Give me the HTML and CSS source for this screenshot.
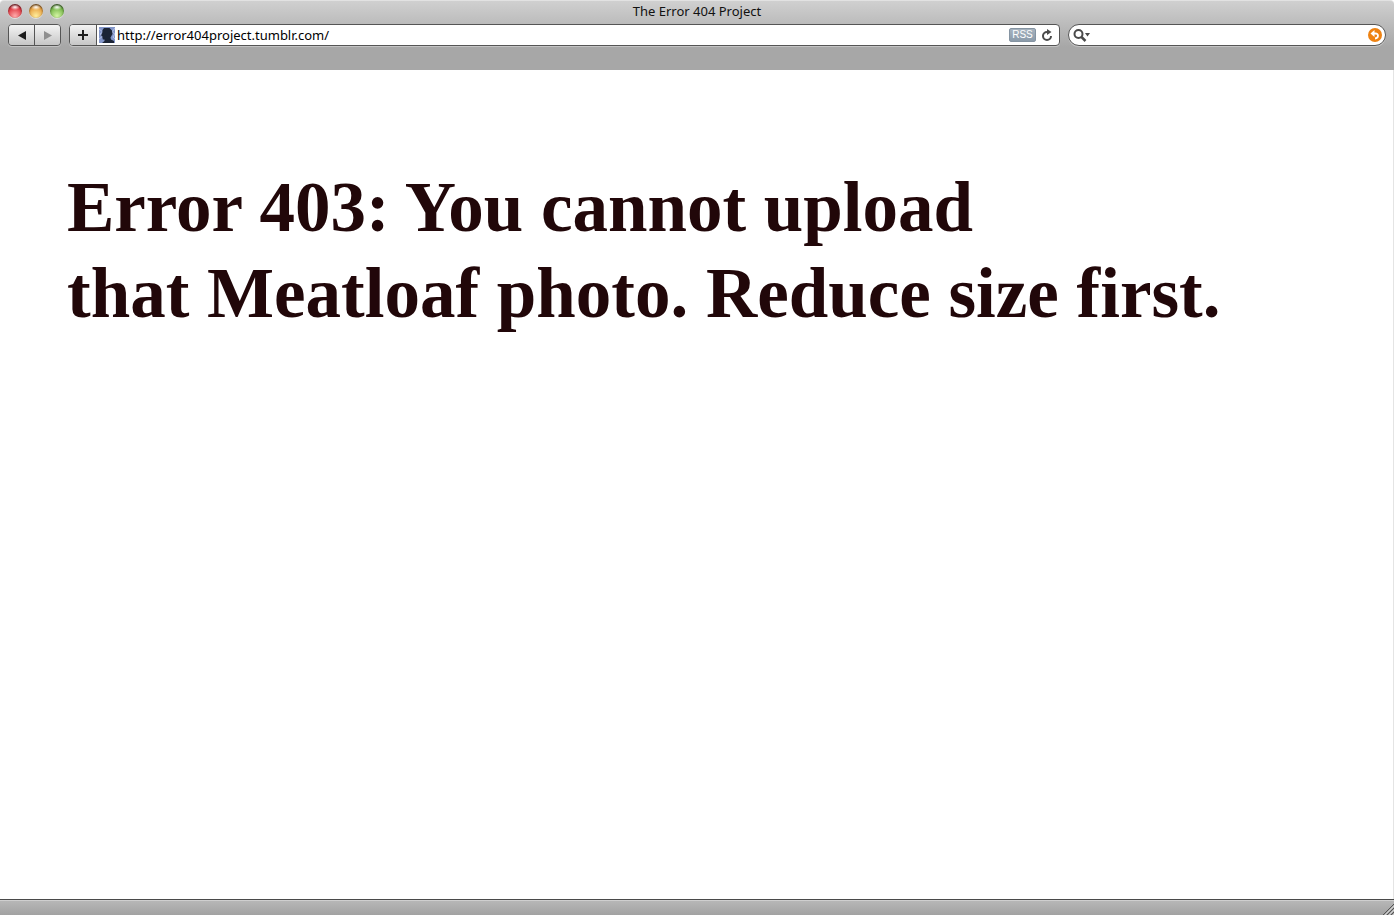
FILE: index.html
```html
<!DOCTYPE html>
<html lang="en">
<head>
  <meta charset="UTF-8">
  <title>The Error 404 Project</title>
  <link rel="stylesheet" href="styles.css">
</head>
<body>
  <header class="chrome">
    <div class="titlebar">
      <div class="lights">
        <button class="light red" aria-label="Close"></button>
        <button class="light yellow" aria-label="Minimize"></button>
        <button class="light green" aria-label="Zoom"></button>
      </div>
      <div class="window-title">The Error 404 Project</div>
    </div>

    <div class="toolbar">
      <div class="nav-buttons">
        <button class="tool-button" aria-label="Back">
          <svg width="10" height="10" viewBox="0 0 10 10"><path d="M9 1v9L1 5.500z" fill="#1c1c1c"/></svg>
        </button>
        <button class="tool-button" aria-label="Forward">
          <svg width="10" height="10" viewBox="0 0 10 10"><path d="M1 1v9l8-4.500z" fill="#8f8f8f"/></svg>
        </button>
      </div>

      <form class="address-bar">
        <button type="button" class="tool-button add-button" aria-label="Add bookmark">
          <svg width="12" height="12" viewBox="0 0 12 12"><path d="M6 1v10M1 6h10" stroke="#1c1c1c" stroke-width="2"/></svg>
        </button>
        <svg class="favicon" width="16" height="16" viewBox="0 0 16 16">
          <rect width="16" height="16" fill="#8396c9"/>
          <path d="M0 2l4 3-3 2 3 2-4 3M16 1l-3 4 3 2-2 3 2 2" fill="none" stroke="#b4c1e6"/>
          <path d="M5 1h5.500L13 3.500 13.500 7l-2 3.500.500 2 3 1.500v2H3l2.500-2v-1.500H3.800L3.200 9 2 8.500 3.200 6 3.500 3z" fill="#1c2536"/>
        </svg>
        <input class="url" type="text" aria-label="Address" value="http://error404project.tumblr.com/" spellcheck="false">
        <button type="button" class="rss">RSS</button>
        <button type="button" class="icon-button" aria-label="Reload">
          <svg width="12" height="14" viewBox="0 0 12 14">
            <path d="M7 4H6A4 4 0 1 0 10 8" fill="none" stroke="#4a4a4a" stroke-width="2"/>
            <path d="M6 1v6l4.500-3z" fill="#4a4a4a"/>
          </svg>
        </button>
      </form>

      <form class="search-bar">
        <svg width="18" height="14" viewBox="0 0 18 14">
          <circle cx="5.500" cy="6" r="4" fill="none" stroke="#4a4a4a" stroke-width="2"/>
          <path d="M8.500 9l4 4" stroke="#4a4a4a" stroke-width="2.500"/>
          <path d="M12 5h5l-2.500 3.500z" fill="#4a4a4a"/>
        </svg>
        <input class="search" type="text" aria-label="Search">
        <button type="button" class="icon-button" aria-label="SnapBack">
          <svg width="14" height="14" viewBox="0 0 14 14">
            <circle cx="7" cy="7" r="7" fill="#ee8212"/>
            <path d="M2.500 5.500L6.500 2v7z" fill="#fff"/>
            <path d="M6 5.500h1.500c3.300 0 3.500 4.500-.500 5" fill="none" stroke="#fff" stroke-width="1.800"/>
          </svg>
        </button>
      </form>
    </div>
  </header>

  <main class="page">
    <h1 class="message">Error 403: You cannot upload<br>that Meatloaf photo. Reduce size first.</h1>
  </main>

  <footer class="statusbar">
    <svg width="12" height="12" viewBox="0 0 12 12">
      <path d="M1 12L12 1M5 12l7-7M9 12l3-3" stroke="#555"/>
      <path d="M2 13L13 2M6 13l7-7M10 13l3-3" stroke="#d0d0d0"/>
    </svg>
  </footer>
</body>
</html>
```

FILE: styles.css
```css
* { box-sizing: border-box; }
body {
  margin: 0;
  min-height: 100vh;
  display: flex;
  flex-direction: column;
  background-color: #fff;
  font-family: "Noto Sans", "Open Sans", sans-serif;
}
button {
  margin: 0;
  padding: 0;
  border: none;
  background: none;
}
input {
  min-width: 0;
  flex: 1;
  border: none;
  outline: none;
  padding: 0;
  background: none;
}
svg {
  display: block;
  flex-shrink: 0;
}

.chrome {
  height: 70px;
  border-top: 1px solid #e2e2e2;
  border-radius: 4px 4px 0 0;
  background: linear-gradient(#d0d0d0, #a7a7a7 46px);
}
.titlebar {
  height: 23px;
  display: grid;
  grid-template-columns: 1fr auto 1fr;
  align-items: center;
  padding: 0 8px 3px;
}
.window-title {
  font-size: 13px;
  line-height: 20px;
  color: #111;
}
.lights {
  display: flex;
  gap: 7px;
}
.light {
  width: 14px;
  height: 14px;
  border-radius: 50%;
  box-shadow: inset 0 1px 2px rgba(0,0,0,0.6), 0 1px 0 rgba(255,255,255,0.5);
}
.red { background: radial-gradient(ellipse 5px 3px at 50% 22%, #fff, transparent), radial-gradient(circle at 50% 85%, #ffabab, #e03a43 60%, #92222a); }
.yellow { background: radial-gradient(ellipse 5px 3px at 50% 22%, #fff, transparent), radial-gradient(circle at 50% 85%, #ffee9c, #e8a344 60%, #91561c); }
.green { background: radial-gradient(ellipse 5px 3px at 50% 22%, #fff, transparent), radial-gradient(circle at 50% 85%, #d4f5a4, #79b94c 60%, #3d6b25); }

.toolbar {
  display: flex;
  gap: 8px;
  padding: 0 8px;
}
.nav-buttons, .address-bar, .search-bar {
  height: 22px;
  display: flex;
  align-items: center;
  border: 1px solid #555;
  border-radius: 4px;
  box-shadow: 0 1px 0 #c4c4c4;
  overflow: hidden;
}
.tool-button {
  width: 26px;
  height: 20px;
  display: flex;
  align-items: center;
  justify-content: center;
  background: linear-gradient(#f4f4f4, #c6c6c6);
}
.tool-button + .tool-button { border-left: 1px solid #555; }
.nav-buttons { width: 53px; }
.address-bar {
  flex: 1;
  background-color: #fff;
  padding-right: 6px;
}
.add-button {
  width: 27px;
  border-right: 1px solid #555;
}
.favicon { margin: 0 2px; }
.url, .search {
  font-family: inherit;
  font-size: 13px;
  color: #000;
}
.rss {
  width: 27px;
  height: 14px;
  margin-right: 5px;
  border: 1px solid #8594a2;
  border-radius: 2px;
  background: linear-gradient(#a6b3bf, #8b9baa);
  font-family: "Liberation Sans", sans-serif;
  font-size: 10px;
  line-height: 12px;
  color: #fff;
}
.icon-button { flex-shrink: 0; }
.search-bar {
  width: 318px;
  padding: 0 3px 0 4px;
  border-radius: 11px;
  background-color: #fff;
}

.page {
  flex: 1;
  padding: 94px 67px;
  border-right: 1px solid #e4e4e4;
}
.message {
  margin: 0;
  font-family: "Liberation Serif", serif;
  font-size: 71px;
  line-height: 86px;
  font-weight: bold;
  color: #210709;
}

.statusbar {
  height: 16px;
  display: flex;
  justify-content: flex-end;
  align-items: flex-end;
  border-top: 1px solid #4a4a4a;
  box-shadow: inset 0 1px 0 #cfcfcf;
  background: linear-gradient(#b8b8b8, #a2a2a2);
}
```
